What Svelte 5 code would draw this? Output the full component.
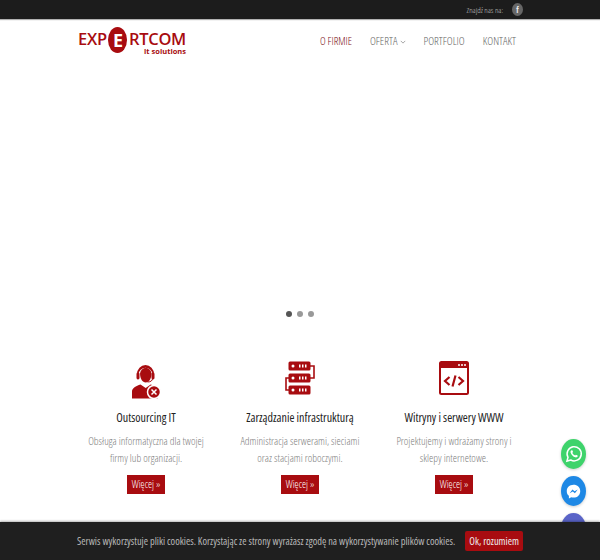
<script lang="ts">
	const services = [
		{ icon: 'agent', title: 'Outsourcing IT', text: ['Obsługa informatyczna dla twojej', 'firmy lub organizacji.'] },
		{ icon: 'server', title: 'Zarządzanie infrastrukturą', text: ['Administracja serwerami, sieciami', 'oraz stacjami roboczymi.'] },
		{ icon: 'code', title: 'Witryny i serwery WWW', text: ['Projektujemy i wdrażamy strony i', 'sklepy internetowe.'] }
	];
</script>

<div class="page">
	<div class="topbar">
		<div class="container top-inner">
			<span class="find">Znajdź nas na:</span>
			<span class="fb">f</span>
		</div>
	</div>

	<header>
		<div class="container head-inner">
			<div class="logo">
				<div class="logo-main">
					<span>EXP</span>
					<span class="logo-e">E</span>
					<span>RTCOM</span>
				</div>
				<div class="logo-sub">it solutions</div>
			</div>
			<nav>
				<span class="active">O FIRMIE</span>
				<span>OFERTA <svg class="caret" viewBox="0 0 8 5" width="6" height="4"><path d="M1 1l3 3 3-3" fill="none" stroke="currentColor" /></svg></span>
				<span>PORTFOLIO</span>
				<span>KONTAKT</span>
			</nav>
		</div>
	</header>

	<section class="hero">
		<div class="dots">
			<i class="on"></i><i></i><i></i>
		</div>
	</section>

	<section class="services">
		{#each services as s}
			<div class="service">
				<div class="icon">
					{#if s.icon === 'agent'}
						<svg viewBox="0 0 30 38" width="30" height="38">
							<g fill="#a80c10">
								<path d="M6 13a8.500 9 0 0 1 17 0h-1.600a7 7.500 0 0 0-13.800 0z" />
								<rect x="5.500" y="11.500" width="3" height="7" rx="1.400" />
								<rect x="20.500" y="11.500" width="3" height="7" rx="1.400" />
								<path d="M9 12.500a5.800 6.500 0 0 1 11.500 0c0 5-2.500 9-5.800 9S9 17.500 9 12.500z" />
								<path d="M1 37.500v-7c0-3.500 4-5.500 8.500-7l5.200 3.500 5-3.500c3 1 5.500 2 7 3.500v10.500z" />
							</g>
							<path d="M21.500 17.500c0 2-1.500 3.500-5 3.500" fill="none" stroke="#a80c10" stroke-width="1" />
							<circle cx="23" cy="31" r="6.500" fill="#a80c10" stroke="#fff" stroke-width="1.500" />
							<path d="M20.500 28.500l5 5M25.500 28.500l-5 5" stroke="#fff" stroke-width="1.500" />
						</svg>
					{:else if s.icon === 'server'}
						<svg viewBox="0 0 30 34" width="30" height="34">
							<g fill="#a80c10">
								<rect x="3.500" y="0.500" width="22" height="9" rx="1.500" />
								<rect x="3.500" y="12.500" width="22" height="9" rx="1.500" />
								<rect x="3.500" y="24.500" width="22" height="9" rx="1.500" />
							</g>
							<path d="M25 5h4v12h-4M4 17H1v12h3" fill="none" stroke="#a80c10" stroke-width="1.600" />
							<g fill="#fff">
								<circle cx="8" cy="5" r="1.500" /><rect x="14" y="3.500" width="1.500" height="3" /><rect x="17" y="3.500" width="1.500" height="3" /><rect x="20" y="3.500" width="1.500" height="3" />
								<circle cx="8" cy="17" r="1.500" /><rect x="14" y="15.500" width="1.500" height="3" /><rect x="17" y="15.500" width="1.500" height="3" /><rect x="20" y="15.500" width="1.500" height="3" />
								<circle cx="8" cy="29" r="1.500" /><rect x="14" y="27.500" width="1.500" height="3" /><rect x="17" y="27.500" width="1.500" height="3" /><rect x="20" y="27.500" width="1.500" height="3" />
							</g>
						</svg>
					{:else}
						<svg viewBox="0 0 30 34" width="30" height="34">
							<rect x="1" y="1" width="28" height="32" rx="1.500" fill="#fff" stroke="#a80c10" stroke-width="2" />
							<rect x="1" y="1" width="28" height="6" fill="#a80c10" />
							<g fill="#fff"><circle cx="20" cy="4" r="1" /><circle cx="23" cy="4" r="1" /><circle cx="26" cy="4" r="1" /></g>
							<path d="M10.500 16l-4.500 4 4.500 4M19.500 16l4.500 4-4.500 4M16.500 14.500l-3 11" fill="none" stroke="#a80c10" stroke-width="2.200" />
						</svg>
					{/if}
				</div>
				<h3>{s.title}</h3>
				<p>{s.text[0]}<br />{s.text[1]}</p>
				<span class="more">Więcej »</span>
			</div>
		{/each}
	</section>

	<div class="floats">
		<div class="fab wa">
			<svg viewBox="0 0 24 24" width="20" height="20" fill="none" stroke="#fff" stroke-width="1.800">
				<path d="M3.500 20.500l1.300-4.600a8.500 8.500 0 1 1 3.300 3.300z" />
				<path fill="#fff" stroke="none" d="M9 7.500c-.9.500-1.500 1.600-1 3 .8 2.600 3 4.700 5.500 5.500 1.400.4 2.500-.2 3-1.200l-.2-1-2-1-.9 1c-1.500-.6-2.800-1.900-3.400-3.400l.9-.9-.9-2z" />
			</svg>
		</div>
		<div class="fab ms">
			<svg viewBox="0 0 24 24" width="17" height="17">
				<path fill="#fff" d="M12 2.500C6.500 2.500 2.500 6.400 2.500 11.500c0 2.700 1.100 5 3 6.600V22l3.300-1.800c1 .3 2.100.4 3.200.4 5.500 0 9.500-3.900 9.500-9.100S17.500 2.500 12 2.500z" />
				<path fill="#1e88e5" d="M6.500 14.500l4-5.500 3 2.500L18 9l-4 5.500-3-2.500z" />
			</svg>
		</div>
		<div class="fab third"></div>
	</div>

	<div class="cookies">
		<span>Serwis wykorzystuje pliki cookies. Korzystając ze strony wyrażasz zgodę na wykorzystywanie plików cookies.</span>
		<span class="ok">Ok, rozumiem</span>
	</div>
</div>

<style>
	:global(body) {
		margin: 0;
		background: #fff;
		overflow: hidden;
	}

	.page {
		position: relative;
		width: 600px;
		height: 560px;
		overflow: hidden;
		font-family: 'Open Sans', 'Liberation Sans', sans-serif;
		font-stretch: 75%;
	}

	.container {
		width: 444px;
		margin: 0 auto;
	}

	.topbar {
		background: #1c1c1c;
		height: 19px;
		box-shadow: 0 1px 1px rgba(0, 0, 0, 0.3);
		display: flex;
	}

	.top-inner {
		display: flex;
		justify-content: flex-end;
		align-items: center;
		gap: 9px;
		position: relative;
		left: 1px;
	}

	.find {
		color: #c4c4c4;
		font-size: 8px;
		font-weight: 300;
	}

	.fb {
		width: 11px;
		height: 13px;
		border-radius: 50%;
		background: #666;
		color: #eee;
		font-size: 8px;
		font-weight: 700;
		display: flex;
		align-items: center;
		justify-content: center;
	}

	header {
		height: 47px;
	}

	.head-inner {
		display: flex;
		justify-content: space-between;
		align-items: center;
		height: 42px;
	}

	.logo {
		width: 108px;
		align-self: flex-start;
		color: #a80c10;
		line-height: 1;
		font-stretch: 100%;
	}

	.logo-main {
		display: flex;
		align-items: center;
		justify-content: space-between;
		font-size: 16.500px;
		font-weight: 600;
		letter-spacing: -0.3px;
		height: 17px;
		margin-top: 12px;
	}

	.logo-e {
		width: 19px;
		height: 26px;
		flex-shrink: 0;
		border-radius: 50%;
		background: #a80c10;
		color: #fff;
		display: flex;
		align-items: center;
		justify-content: center;
		font-size: 18px;
		font-weight: 700;
	}

	.logo-sub {
		text-align: right;
		font-size: 7.500px;
		font-weight: 700;
	}

	nav {
		display: flex;
		gap: 18px;
		font-size: 11.200px;
		font-weight: 300;
		color: #666;
		margin-right: 6px;
	}

	nav .active {
		color: #7a1014;
		font-size: 10.800px;
	}

	.caret {
		vertical-align: 1px;
		color: #888;
	}

	.hero {
		height: 284px;
		display: flex;
		align-items: flex-end;
		justify-content: center;
	}

	.dots {
		display: flex;
		gap: 5px;
		margin-bottom: 33px;
	}

	.dots i {
		width: 6px;
		height: 6px;
		border-radius: 50%;
		background: #999;
	}

	.dots i.on {
		background: #555;
	}

	.services {
		display: grid;
		grid-template-columns: repeat(3, 154px);
		justify-content: center;
		text-align: center;
	}

	.service {
		display: flex;
		flex-direction: column;
		align-items: center;
	}

	.icon {
		height: 38px;
		display: flex;
		align-items: flex-start;
		justify-content: center;
		margin: 11px 0 11px;
	}

	h3 {
		margin: 0 0 7px;
		font-size: 12px;
		line-height: 16px;
		font-weight: 400;
		color: #222;
	}

	p {
		margin: 0 0 9px;
		font-size: 10.800px;
		line-height: 16.500px;
		font-weight: 300;
		color: #808080;
		white-space: nowrap;
	}

	.more {
		background: #a80c10;
		color: #fff;
		font-size: 10.300px;
		font-weight: 300;
		line-height: 19px;
		padding: 0 5px;
	}

	.floats {
		position: absolute;
		right: 14px;
		top: 439px;
		display: flex;
		flex-direction: column;
		gap: 7px;
	}

	.fab {
		width: 25px;
		height: 30px;
		border-radius: 50%;
		display: flex;
		align-items: center;
		justify-content: center;
		box-shadow: 0 1px 3px rgba(0, 0, 0, 0.2);
	}

	.wa {
		background: #3ed36b;
	}

	.ms {
		background: #1e88e5;
	}

	.third {
		background: #5a64c8;
	}

	.cookies {
		position: absolute;
		left: 0;
		right: 0;
		bottom: 0;
		height: 38px;
		background: #1f1f1f;
		box-shadow: 0 -1px 2px rgba(0, 0, 0, 0.3);
		display: flex;
		align-items: center;
		justify-content: center;
		gap: 10px;
		color: #b8b8b8;
		font-size: 10.350px;
	}

	.ok {
		background: #a80c10;
		color: #eee;
		line-height: 20px;
		padding: 0 4px;
		border-radius: 2px;
	}
</style>
